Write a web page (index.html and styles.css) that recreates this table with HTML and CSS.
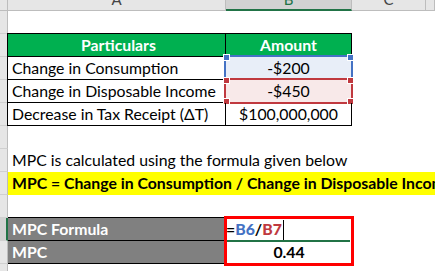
FILE: index.html
```html
<!DOCTYPE html>
<html>
<head>
<meta charset="utf-8">
<link rel="stylesheet" href="styles.css">
</head>
<body>
<div class="sheet">
  <div class="row hdr">
    <div class="rh corner"></div>
    <div class="ch ca"><span>A</span></div>
    <div class="ch cb selcol"><span>B</span></div>
    <div class="ch cc"><span>C</span></div>
    <div class="ch cd"></div>
  </div>
  <div class="row first">
    <div class="rh"></div><div class="c ca"></div><div class="c cb"></div><div class="c rest"></div>
  </div>
  <div class="row">
    <div class="rh"></div>
    <div class="c ca t green top">Particulars</div>
    <div class="c cb t green top center">Amount</div>
    <div class="c rest"></div>
  </div>
  <div class="row">
    <div class="rh"></div>
    <div class="c ca t">Change in Consumption</div>
    <div class="c cb t center ref-blue">-$200<span class="box blue"><i class="h tl"></i><i class="h tr"></i></span></div>
    <div class="c rest"></div>
  </div>
  <div class="row">
    <div class="rh"></div>
    <div class="c ca t">Change in Disposable Income</div>
    <div class="c cb t center ref-red">-$450<span class="box red"><i class="h tl"></i><i class="h tr"></i><i class="h bl"></i><i class="h br"></i></span></div>
    <div class="c rest"></div>
  </div>
  <div class="row">
    <div class="rh"></div>
    <div class="c ca t">Decrease in Tax Receipt (&#916;T)</div>
    <div class="c cb t center">$100,000,000</div>
    <div class="c rest"></div>
  </div>
  <div class="row">
    <div class="rh"></div><div class="c fill"></div>
  </div>
  <div class="row">
    <div class="rh"></div><div class="c fill txt">MPC is calculated using the formula given below</div>
  </div>
  <div class="row">
    <div class="rh"></div><div class="c fill txt yellow">MPC = Change in Consumption / Change in Disposable Income</div>
  </div>
  <div class="row">
    <div class="rh"></div><div class="c fill"></div>
  </div>
  <div class="row">
    <div class="rh active"></div>
    <div class="c ca gray gtop">MPC Formula</div>
    <div class="c cb formula">=<b class="fb">B6</b>/<b class="fr">B7</b><span class="caret"></span><span class="underline"></span></div>
    <div class="c rest"></div>
  </div>
  <div class="row">
    <div class="rh"></div>
    <div class="c ca gray">MPC</div>
    <div class="c cb center result">0.44<span class="redbox"></span></div>
    <div class="c rest"></div>
  </div>
  <div class="row">
    <div class="rh"></div><div class="c fill"></div>
  </div>
</div>
</body>
</html>
```
FILE: styles.css
```css
html, body {
  margin: 0;
  padding: 0;
  background: #ffffff;
}
body {
  font-family: Lato, "Liberation Sans", sans-serif;
  font-size: 15.8px;
  color: #000000;
  overflow: hidden;
}
.sheet {
  width: 435px;
  height: 271px;
  overflow: hidden;
}
.row {
  display: flex;
  height: 23px;
}
.row.hdr {
  height: 11px;
}
.row.first {
  height: 23px;
}
.rh {
  flex: none;
  width: 8px;
  box-sizing: border-box;
  background: #e6e6e6;
  border-right: 1px solid #bdbdbd;
  border-bottom: 1px solid #d0d0d0;
}
.rh.corner {
  border-bottom: 1px solid #bdbdbd;
}
.rh.active {
  border-right: 2px solid #217346;
  background: #d2d2d2;
}
.ca { width: 218px; flex: none; }
.cb { width: 126px; flex: none; }
.cc { width: 74px; flex: none; }
.cd { flex: 1; }
.rest { flex: 1; }
.fill { flex: 1; }

.ch {
  box-sizing: border-box;
  background: #e6e6e6;
  border-right: 1px solid #bdbdbd;
  border-bottom: 1px solid #bdbdbd;
  display: flex;
  justify-content: center;
  overflow: hidden;
  color: #444444;
  font-size: 15px;
}
.ch span {
  display: block;
  line-height: 15px;
  margin-top: -8px;
}
.ch.selcol {
  background: #d2d2d2;
  border-bottom: 2px solid #217346;
  color: #217346;
}

.c {
  box-sizing: border-box;
  position: relative;
  white-space: nowrap;
  line-height: 22px;
}
.t {
  border-right: 1px solid #000000;
  border-bottom: 1px solid #000000;
  padding-left: 4px;
}
.ca.t {
  border-left: 1px solid #000000;
  margin-left: -1px;
  width: 219px;
}
.top {
  border-top: 1px solid #000000;
  margin-top: -1px;
  height: 24px;
}
.center {
  text-align: center;
  padding-left: 0;
}
.green {
  background: #00b050;
  color: #ffffff;
  font-weight: bold;
  text-align: center;
}
.ref-blue {
  background: #e8eef8;
}
.ref-red {
  background: #f8e9e9;
}
.box {
  position: absolute;
  left: -2px;
  right: -2px;
  top: -2px;
  bottom: -2px;
  box-sizing: border-box;
  pointer-events: none;
}
.box.blue {
  border: 2px solid #4472c4;
  border-bottom: none;
  bottom: 0;
}
.box.red {
  border: 2px solid #c0393f;
}
.h {
  position: absolute;
  width: 5px;
  height: 5px;
  border: 1px solid #ffffff;
}
.blue .h { background: #4472c4; }
.red .h { background: #c0393f; }
.h.tl { left: -3px; top: -3px; }
.h.tr { right: -3px; top: -3px; }
.h.bl { left: -3px; bottom: -3px; }
.h.br { right: -3px; bottom: -3px; }

.txt {
  padding-left: 4px;
  overflow: hidden;
}
.yellow {
  background: #ffff00;
  font-weight: bold;
}
.gray {
  background: #808080;
  color: #ffffff;
  font-weight: bold;
  padding-left: 4px;
  border-bottom: 1px solid #000000;
  border-right: 1px solid #000000;
}
.gtop {
  border-top: 1px solid #000000;
  margin-top: -1px;
  height: 24px;
}
.formula {
  font-weight: bold;
  padding-left: 0;
}
.fb { color: #4472c4; }
.fr { color: #c0393f; }
.caret {
  display: inline-block;
  width: 1px;
  height: 20px;
  background: #000000;
  vertical-align: -5px;
  margin-left: 1px;
}
.underline {
  position: absolute;
  left: 0;
  right: 2px;
  bottom: -1px;
  height: 2px;
  background: #217346;
}
.result {
  font-weight: bold;
}
.redbox {
  position: absolute;
  left: -2px;
  right: -2px;
  top: -25px;
  bottom: -2px;
  border: 3px solid #ff0000;
  pointer-events: none;
}
```
